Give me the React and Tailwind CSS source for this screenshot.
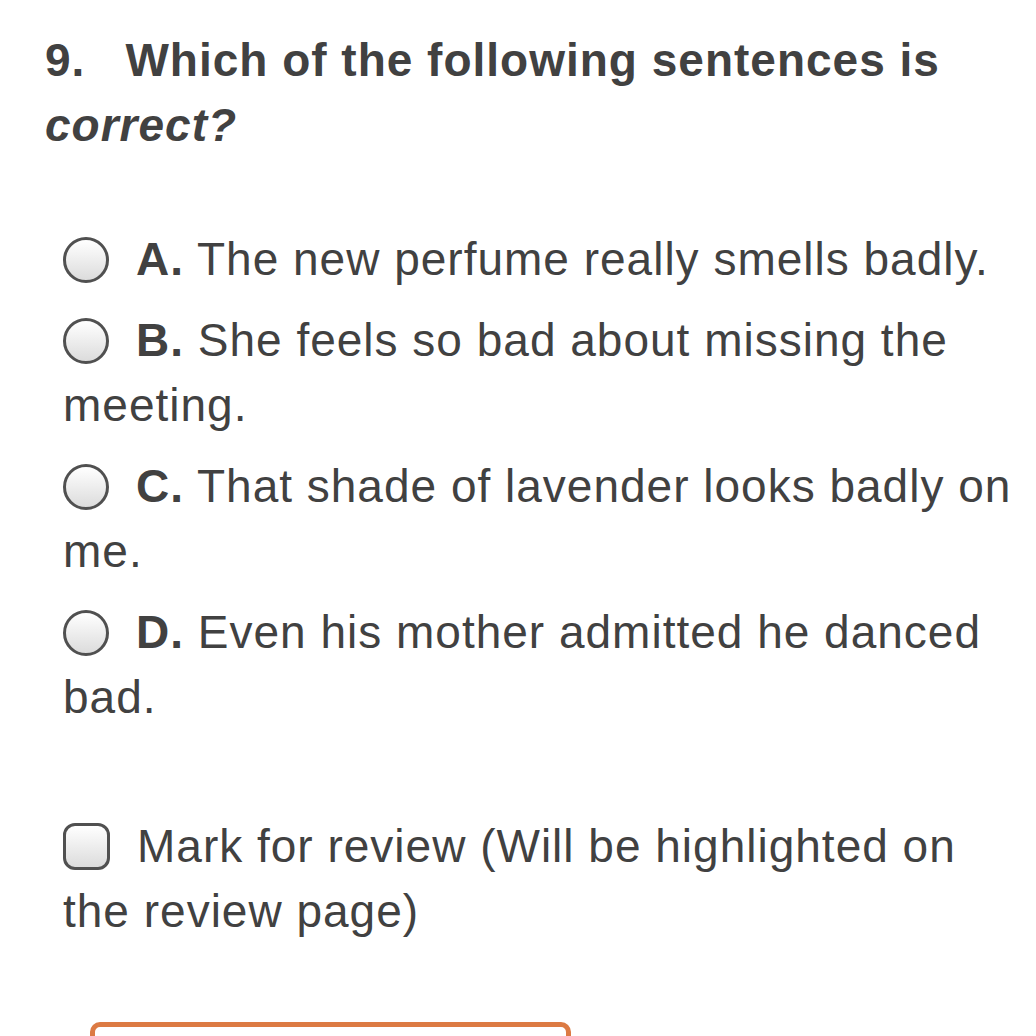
import React from 'react';

const options = [
  { letter: 'A.', text: 'The new perfume really smells badly.' },
  { letter: 'B.', text: 'She feels so bad about missing the meeting.' },
  { letter: 'C.', text: 'That shade of lavender looks badly on me.' },
  { letter: 'D.', text: 'Even his mother admitted he danced bad.' },
];

const Radio = () => (
  <span className="inline-block w-[46px] h-[46px] rounded-full border-[3px] border-[#505050] bg-gradient-to-b from-white to-[#dcdcdc] align-middle mr-[27px] -mt-[6px]" />
);

export default function App() {
  return (
    <div className="min-h-screen bg-white text-[#414141] pl-[45px] pr-[16px] pt-[28px] overflow-hidden tracking-[1px]" style={{ fontFamily: '"Liberation Sans", Arial, sans-serif' }}>
      <h2 className="text-[46px] leading-[65px] font-bold">
        <span className="mr-[40px]">9.</span>Which of the following sentences is <em>correct?</em>
      </h2>

      <div className="pl-[18px] mt-[69px] flex flex-col gap-[16px] text-[46px] leading-[65px]">
        {options.map((o) => (
          <div key={o.letter}>
            <Radio />
            <b>{o.letter}</b> {o.text}
          </div>
        ))}
      </div>

      <div className="pl-[18px] mt-[84px] text-[46px] leading-[65px]">
        <span className="inline-block w-[47px] h-[47px] rounded-[12px] border-[3px] border-[#505050] bg-gradient-to-b from-white to-[#dcdcdc] align-middle mr-[27px] -mt-[6px]" />
        Mark for review (Will be highlighted on the review page)
      </div>

      <div className="ml-[45px] mt-[78px] w-[481px] h-[60px] border-[5px] border-[#dc7a43] rounded-[10px]" />
    </div>
  );
}
